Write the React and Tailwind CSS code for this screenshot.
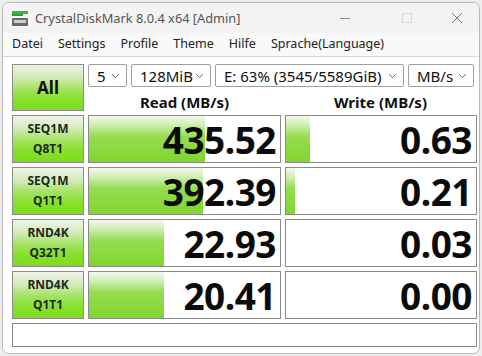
import React from "react";

const rows = [
  { a: "SEQ1M", b: "Q8T1", read: "435.52", write: "0.63", rw: 116, ww: 24 },
  { a: "SEQ1M", b: "Q1T1", read: "392.39", write: "0.21", rw: 114, ww: 9 },
  { a: "RND4K", b: "Q32T1", read: "22.93", write: "0.03", rw: 75, ww: 0 },
  { a: "RND4K", b: "Q1T1", read: "20.41", write: "0.00", rw: 75, ww: 0 },
];

function Chevron() {
  return (
    <svg width="9" height="6" viewBox="0 0 9 6" className="shrink-0">
      <path d="M1 1.2 L4.5 4.6 L8 1.2" fill="none" stroke="#666" strokeWidth="1" />
    </svg>
  );
}

function Select({ w, text }) {
  return (
    <div
      className="h-[23px] flex items-center border border-[#a0a0a0] bg-white rounded-[2px] pl-[8px] pr-[6px] gap-[2px]"
      style={{ width: w }}
    >
      <div className="flex-1 min-w-0 overflow-hidden whitespace-nowrap text-[15px] leading-[20px] text-[#111]">
        {text}
      </div>
      <Chevron />
    </div>
  );
}

function Cell({ w, value, bar }) {
  return (
    <div className="relative h-[48px] border border-[#8a8a8a] bg-white overflow-hidden" style={{ width: w }}>
      {bar > 0 && (
        <div
          className="absolute left-0 top-0 bottom-0 bg-[linear-gradient(to_bottom,#f4f8f0_0%,#cdeeb0_20%,#94dd50_45%,#80d62e_100%)]"
          style={{ width: bar }}
        />
      )}
      <div className="relative h-full flex items-center justify-end pr-[4px] text-[37px] font-bold leading-none text-[#0b0b0b] tracking-[-0.5px]">
        {value}
      </div>
    </div>
  );
}

const greenBtn =
  "border border-[#8c8c8c] bg-[linear-gradient(to_bottom,#eef3e8_0%,#d6ecc0_25%,#9fe25a_55%,#84e026_80%,#7edc20_100%)]";

export default function App() {
  return (
    <div className="w-[482px] h-[356px] bg-[#ededed] font-['Noto_Sans',sans-serif] overflow-hidden">
      <div className="ml-[2px] mt-[2px] w-[478px] h-[352px] rounded-[7px] border border-[#b8b8b8] bg-white overflow-hidden flex flex-col">
        {/* title bar */}
        <div className="h-[30px] bg-[#f3f3f3] flex items-center shrink-0">
          <svg width="16" height="15" viewBox="0 0 16 15" className="ml-[9px] mt-[1px]">
            <rect x="0" y="0" width="16" height="3" fill="#3cb43c" />
            <rect x="0" y="3" width="11" height="2" fill="#2e9e2e" />
            <rect x="0" y="7" width="16" height="8" rx="1" fill="#6a6a6a" />
            <rect x="2" y="9" width="12" height="3" fill="#d0d0d0" />
          </svg>
          <div className="ml-[7px] text-[12.8px] text-[#555] leading-none">CrystalDiskMark 8.0.4 x64 [Admin]</div>
          <div className="flex-1" />
          <svg width="12" height="12" viewBox="0 0 12 12" className="mr-[50px]">
            <path d="M1 6.5 H11" stroke="#888" strokeWidth="1" />
          </svg>
          <svg width="12" height="12" viewBox="0 0 12 12" className="mr-[38px]">
            <rect x="1.5" y="1.5" width="9" height="9" fill="none" stroke="#d6d6d6" strokeWidth="1" />
          </svg>
          <svg width="12" height="12" viewBox="0 0 12 12" className="mr-[16px]">
            <path d="M1 1 L11 11 M11 1 L1 11" stroke="#777" strokeWidth="1" />
          </svg>
        </div>
        {/* menu */}
        <div className="h-[24px] bg-[#f9f9f9] border-b border-[#d8d8d8] flex items-center text-[12.5px] text-[#222] leading-none shrink-0 pl-[9px] gap-[15px]">
          <span>Datei</span>
          <span>Settings</span>
          <span>Profile</span>
          <span>Theme</span>
          <span>Hilfe</span>
          <span>Sprache(Language)</span>
        </div>
        {/* content */}
        <div className="flex-1 bg-white pl-[9px] pt-[7px]">
          <div className="flex gap-[4px]">
            <div className={`w-[72px] h-[47px] ${greenBtn} flex items-center justify-center text-[17px] font-bold text-[#111]`}>
              All
            </div>
            <div className="flex flex-col">
              <div className="flex gap-[4px]">
                <Select w={39} text="5" />
                <Select w={80} text="128MiB" />
                <Select w={189} text="E: 63% (3545/5589GiB)" />
                <Select w={66} text="MB/s" />
              </div>
              <div className="flex gap-[4px] mt-[6px]">
                <div className="w-[193px] text-center text-[15px] font-bold text-[#111] leading-[18px]">Read (MB/s)</div>
                <div className="w-[191px] text-center text-[15px] font-bold text-[#111] leading-[18px]">Write (MB/s)</div>
              </div>
            </div>
          </div>
          <div className="flex flex-col gap-[4px] mt-[4px]">
            {rows.map((r, i) => (
              <div key={i} className="flex gap-[4px]">
                <div className={`w-[72px] h-[48px] ${greenBtn} flex flex-col items-center justify-center text-[12px] font-bold text-[#1d2a1d] leading-[20px]`}>
                  <span>{r.a}</span>
                  <span>{r.b}</span>
                </div>
                <Cell w={193} value={r.read} bar={r.rw} />
                <Cell w={192} value={r.write} bar={r.ww} />
              </div>
            ))}
          </div>
          <div className="mt-[4px] w-[465px] h-[24px] border border-[#8a8a8a] bg-white" />
        </div>
      </div>
    </div>
  );
}
